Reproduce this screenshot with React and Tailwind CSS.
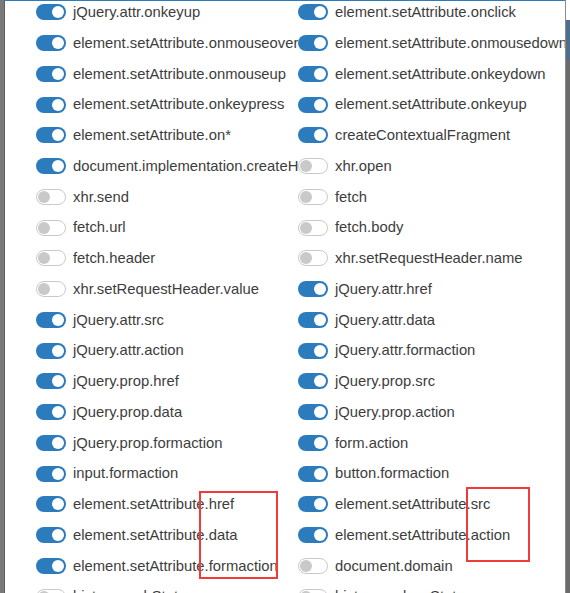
import React from 'react';

// [label, enabled] pairs, row by row (left column, right column)
const ROWS = [
  [['jQuery.attr.onkeyup', true], ['element.setAttribute.onclick', true]],
  [['element.setAttribute.onmouseover', true], ['element.setAttribute.onmousedown', true]],
  [['element.setAttribute.onmouseup', true], ['element.setAttribute.onkeydown', true]],
  [['element.setAttribute.onkeypress', true], ['element.setAttribute.onkeyup', true]],
  [['element.setAttribute.on*', true], ['createContextualFragment', true]],
  [['document.implementation.createHTMLDocument', true], ['xhr.open', false]],
  [['xhr.send', false], ['fetch', false]],
  [['fetch.url', false], ['fetch.body', false]],
  [['fetch.header', false], ['xhr.setRequestHeader.name', false]],
  [['xhr.setRequestHeader.value', false], ['jQuery.attr.href', true]],
  [['jQuery.attr.src', true], ['jQuery.attr.data', true]],
  [['jQuery.attr.action', true], ['jQuery.attr.formaction', true]],
  [['jQuery.prop.href', true], ['jQuery.prop.src', true]],
  [['jQuery.prop.data', true], ['jQuery.prop.action', true]],
  [['jQuery.prop.formaction', true], ['form.action', true]],
  [['input.formaction', true], ['button.formaction', true]],
  [['element.setAttribute.href', true], ['element.setAttribute.src', true]],
  [['element.setAttribute.data', true], ['element.setAttribute.action', true]],
  [['element.setAttribute.formaction', true], ['document.domain', false]],
  [['history.pushState', false], ['history.replaceState', false]],
];

function Toggle({ on }) {
  if (on) {
    return (
      <div className="relative shrink-0 w-[30px] h-[16px] rounded-full bg-[#2b7bbd]">
        <div className="absolute right-[2px] top-[2px] w-[12px] h-[12px] rounded-full bg-white" />
      </div>
    );
  }
  return (
    <div className="relative shrink-0 w-[30px] h-[16px] rounded-full bg-white border border-[#c9c9c9]">
      <div className="absolute left-[1px] top-[1px] w-[12px] h-[12px] rounded-full bg-[#c9c9c9]" />
    </div>
  );
}

function Item({ label, on, clip }) {
  return (
    <div className={`flex items-center gap-[7px] whitespace-nowrap ${clip ? 'overflow-hidden' : ''}`}>
      <Toggle on={on} />
      <span className="text-[14.8px] text-[#3d3d3d] leading-none">{label}</span>
    </div>
  );
}

export default function App() {
  return (
    <div
      className="relative w-[570px] h-[593px] overflow-hidden flex bg-white"
      style={{ fontFamily: '"Liberation Sans", Arial, sans-serif' }}
    >
      {/* dimmed page behind the dialog, left side */}
      <div className="w-[4px] shrink-0 bg-[#7a7a7a]" />

      {/* dialog body */}
      <div className="flex-1 min-w-0 overflow-hidden bg-white border-l border-[#5e5e5e] border-t border-t-[#2b7bbd]">
        <div className="grid grid-cols-[262px_262px] auto-rows-[30.75px] pl-[31px] mt-[-3.9px]">
          {ROWS.map(([left, right], i) => (
            <React.Fragment key={i}>
              <Item label={left[0]} on={left[1]} clip />
              <Item label={right[0]} on={right[1]} />
            </React.Fragment>
          ))}
        </div>
      </div>

      {/* dimmed page behind the dialog, right side */}
      <div className="w-[5px] shrink-0 flex flex-col border-l border-[#8a8a8a]">
        <div className="h-[20px] bg-white" />
        <div className="h-[40px] bg-[#4d6f8c]" />
        <div className="flex-1 bg-[#6b6b6b]" />
      </div>

      {/* red annotation boxes */}
      <div className="absolute left-[199px] top-[491px] w-[79px] h-[88px] border-[2.5px] border-[#f03b3b]" />
      <div className="absolute left-[466px] top-[487px] w-[64px] h-[75px] border-[2.5px] border-[#f03b3b]" />
    </div>
  );
}
